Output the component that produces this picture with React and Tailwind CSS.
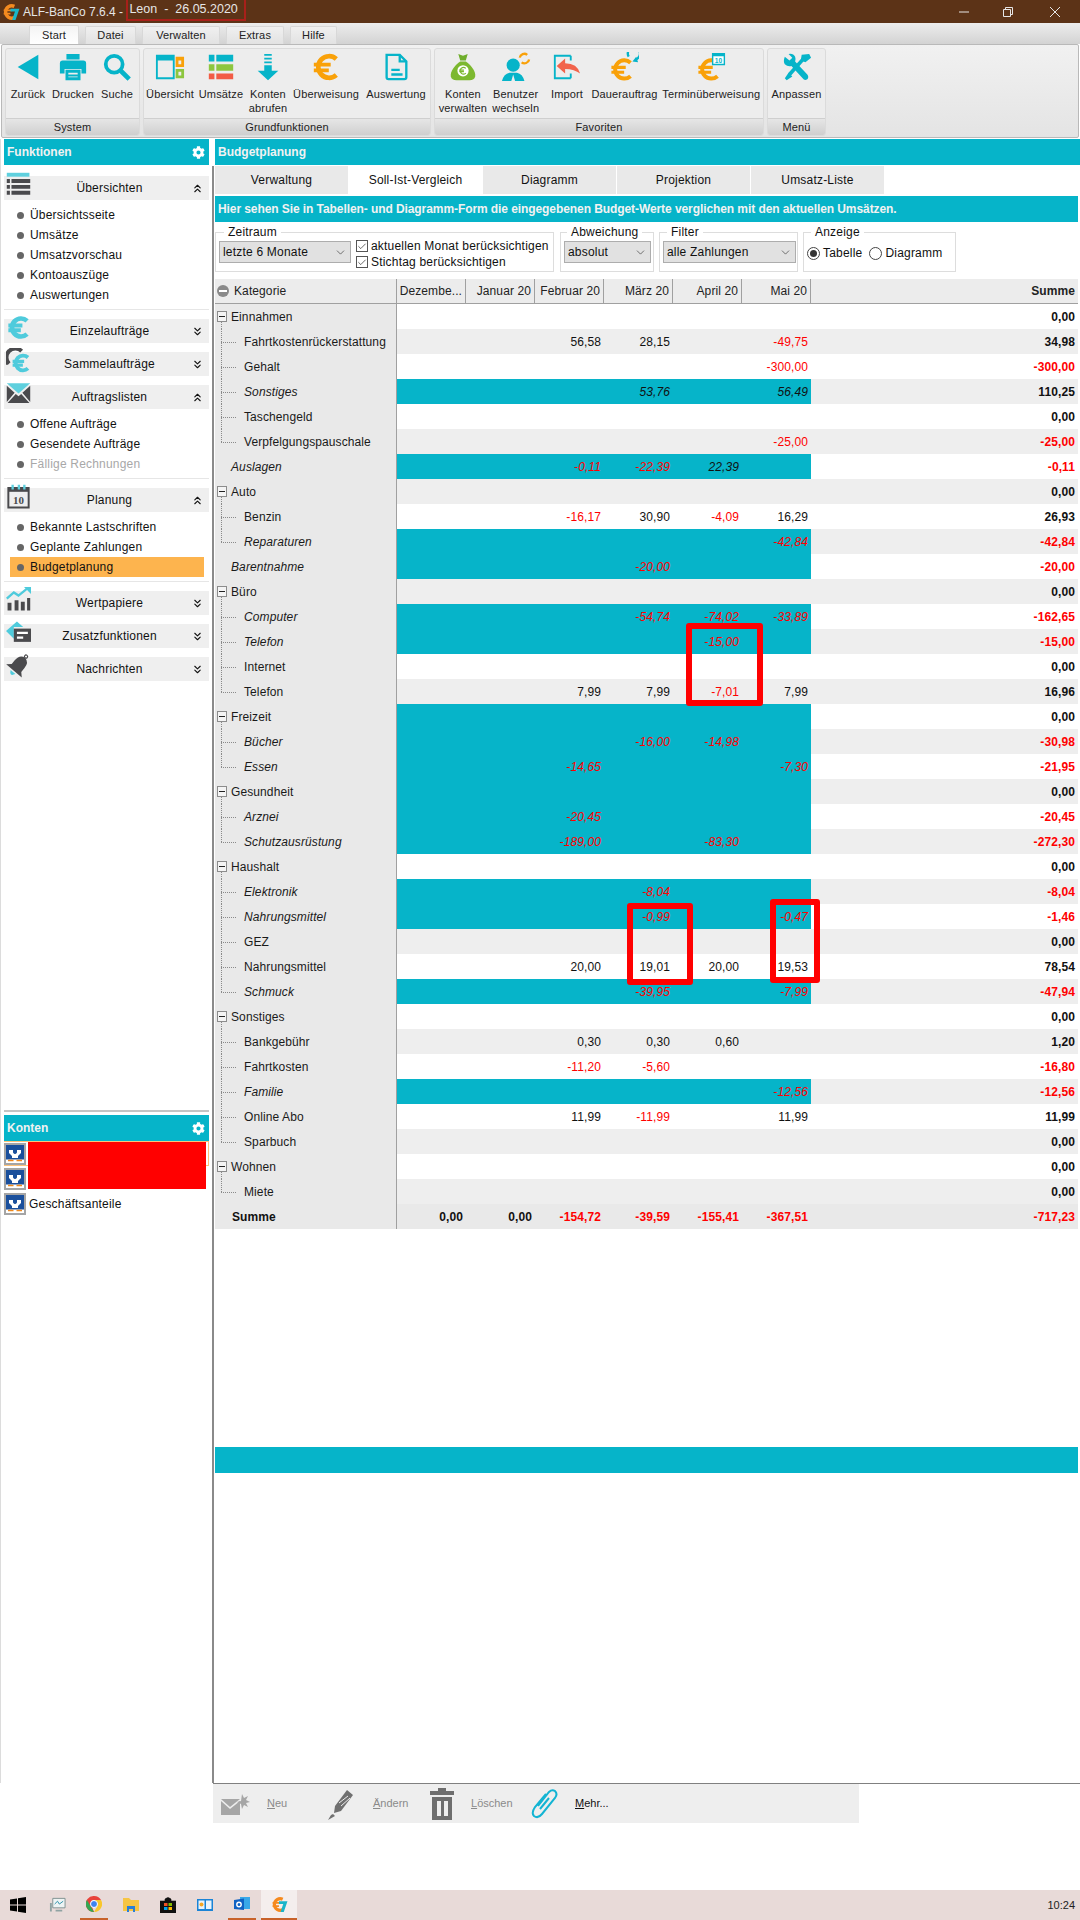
import { Check, ChevronDown, ChevronsDown, ChevronsUp } from "lucide-react";
import { FaCog } from "react-icons/fa";

const TEAL = "#06b4c9";
const ORANGE = "#f9a109";
const DARK = "#4a4a4d";

// Icons
const Euro = ({ color = ORANGE, w = 5 }) => (
  <g fill="none" stroke={color} strokeWidth={w}>
    <path d="M27 7.5A11.5 11.5 0 1 0 27 24.5" />
    <path d="M3 13.5H21M3 19.5H19" strokeWidth={w - 1} />
  </g>
);

const Ic = ({ size = 32, children, className = "" }) => (
  <svg viewBox="0 0 32 32" width={size} height={size} className={`shrink-0 ${className}`}>
    {children}
  </svg>
);

const AlfLogo = ({ size = 18 }) => (
  <Ic size={size}>
    <path d="M22 6A11 11 0 1 0 22 26" fill="none" stroke="#f58a1f" strokeWidth="6" />
    <path d="M3 13H17M3 19H15" stroke="#f58a1f" strokeWidth="3" />
    <path d="M15 10H31L24 30H18L23 15H15Z" fill="#19b5c9" />
  </Ic>
);

const ribbonIcons = {
  back: <path d="M27 3V29L5 16Z" fill={TEAL} />,
  print: (
    <g fill={TEAL}>
      <path d="M9 2H23V8H9Z" />
      <path d="M5 9H27Q30 9 30 12V23H25V18H7V23H2V12Q2 9 5 9Z" />
      <path d="M8 19H24V30H8ZM11 22V24H21V22ZM11 26V27H21V26Z" fillRule="evenodd" />
    </g>
  ),
  search: (
    <g fill="none" stroke={TEAL}>
      <circle cx="13" cy="13" r="9" strokeWidth="4" />
      <path d="M20 20L29 29" strokeWidth="5" />
    </g>
  ),
  overview: (
    <g>
      <path d="M2 4H20V28H2Z" fill="none" stroke={TEAL} strokeWidth="2" />
      <path d="M2 4H20V9H2Z" fill={TEAL} />
      <path d="M22 5H31V16H22ZM25 9V13H28V9Z" fill={ORANGE} fillRule="evenodd" />
      <path d="M22 18H31V28H22ZM25 21V25H28V21Z" fill="#8dc63f" fillRule="evenodd" />
    </g>
  ),
  list: (
    <g>
      <path d="M3 3H9V10H3Z" fill={TEAL} />
      <path d="M11 3H29V10H11Z" fill={TEAL} />
      <path d="M3 13H9V20H3ZM11 13H29V20H11Z" fill="#8dc63f" />
      <path d="M3 23H9V29H3ZM11 23H29V29H11Z" fill="#f25c45" />
    </g>
  ),
  fetch: (
    <g fill={TEAL}>
      <path d="M12 2H20V4H12ZM12 6H20V8H12ZM12 10H20V12H12Z" />
      <path d="M12 14H20V20H27L16 30L5 20H12Z" />
    </g>
  ),
  euro: <Euro />,
  doc: (
    <g fill="none" stroke={TEAL} strokeWidth="2.5">
      <path d="M6 3H20L27 10V27Q27 29 25 29H8Q6 29 6 27Z" />
      <path d="M20 3V10H27" />
      <path d="M11 19H20M11 24H23" />
    </g>
  ),
  bag: (
    <g>
      <path d="M11 2L16 4L21 2L19 9H13Z" fill="#6fae2c" />
      <path d="M13 10H19C25 14 30 21 29 26Q28 30 23 30H9Q4 30 3 26C2 21 7 14 13 10Z" fill="#7cb82f" />
      <circle cx="16" cy="20" r="6" fill="#fff" />
      <path d="M19 17.5A3.5 3.5 0 1 0 19 22.5M12 19.3H17M12 21H17" fill="none" stroke="#7cb82f" strokeWidth="1.3" />
    </g>
  ),
  user: (
    <g>
      <circle cx="13" cy="14" r="7" fill={TEAL} />
      <path d="M1 31Q3 23 9 22H17Q23 23 25 31H15L13 24L11 31Z" fill={TEAL} />
      <path d="M20 6A5 5 0 0 1 28 3M30 8A5 5 0 0 1 22 11" fill="none" stroke={ORANGE} strokeWidth="2.5" />
    </g>
  ),
  import: (
    <g>
      <path d="M20 4H3V28H20" fill="none" stroke={TEAL} strokeWidth="2" />
      <path d="M20 4V9M20 23V28" stroke={TEAL} strokeWidth="2" />
      <path d="M5 15L14 7V12Q27 12 30 23Q24 18 14 18V23Z" fill="#f2644c" />
    </g>
  ),
  standing: (
    <g>
      <g transform="translate(0 5) scale(.85)"><Euro /></g>
      <path d="M22 8A6.5 6.5 0 1 1 29 11" fill="none" stroke={TEAL} strokeWidth="2.5" transform="translate(-1 -3)" />
      <path d="M29 5L31 11L25 10Z" fill={TEAL} />
    </g>
  ),
  dated: (
    <g>
      <g transform="translate(0 5) scale(.85)"><Euro /></g>
      <path d="M17 1H31V14H17Z" fill={TEAL} />
      <path d="M18.500 4.500H29.500V12.500H18.500Z" fill="#fff" />
      <text x="24" y="11.500" fontSize="7" textAnchor="middle" fill={TEAL} fontWeight="700">10</text>
    </g>
  ),
  tools: (
    <g>
      <path d="M8 24L24 6" stroke={TEAL} strokeWidth="4" />
      <path d="M21 3L29 2L31 6L25 11L20 9Z" fill={TEAL} />
      <path d="M3 5L8 9L11 6L7 2Q12 1 14 5Q15 8 14 10L27 24Q29 27 27 29Q24 31 22 28L10 15Q6 16 3 13Q1 10 3 5Z" fill={TEAL} />
      <path d="M7 22L11 26L5 30L3 28Z" fill={TEAL} />
    </g>
  ),
};

const navIcons = {
  list: (
    <g>
      <path d="M1 1H30V6H1Z" fill="#5fd0de" />
      <path d="M1 9H5V14H1ZM7 9H31V14H7ZM1 16.500H5V21.500H1ZM7 16.500H31V21.500H7ZM1 24H5V29H1ZM7 24H31V29H7Z" fill={DARK} />
    </g>
  ),
  euro: <Euro color="#4fcbdc" w={6} />,
  gearEuro: (
    <g>
      <path d="M4 20A11 11 0 0 1 20 4" fill="none" stroke={DARK} strokeWidth="5" />
      <path d="M1.500 21A14 14 0 0 1 20 1" fill="none" stroke={DARK} strokeWidth="3" strokeDasharray="3 2.500" />
      <g transform="translate(6 6) scale(.82)"><Euro color="#4fcbdc" w={6} /></g>
    </g>
  ),
  mail: (
    <g>
      <path d="M1 3H31L16 16Z" fill="#5fd0de" />
      <path d="M1 6L11 15L1 27ZM31 6L21 15L31 27ZM12.500 16.500L16 19.500L19.500 16.500L30 28H2Z" fill={DARK} />
    </g>
  ),
  calendar: (
    <g>
      <path d="M3 5H29V30H3Z" fill="none" stroke={DARK} strokeWidth="2.5" />
      <path d="M3 5H29V10H3Z" fill={DARK} />
      <path d="M7 1H10V7H7ZM15 1H18V7H15ZM22 1H25V7H22Z" fill="#5fd0de" />
      <text x="16" y="25" fontSize="14" textAnchor="middle" fill={DARK} fontFamily="Liberation Serif" fontWeight="700">10</text>
    </g>
  ),
  chart: (
    <g>
      <path d="M2 20H7V30H2ZM11 17H16V30H11ZM19 19H24V30H19ZM27 14H31V30H27Z" fill={DARK} />
      <path d="M1 15L10 7L16 11L27 2" fill="none" stroke="#4fcbdc" strokeWidth="3" />
      <path d="M23 0H32V9Z" fill="#4fcbdc" />
    </g>
  ),
  card: (
    <g>
      <path d="M0 14L14 2L22 9H10V24Z" fill="#4fcbdc" />
      <path d="M10 11H32V28H10Z" fill={DARK} />
      <path d="M14 15H28V18H14ZM14 21H22V24H14Z" fill="#fff" />
    </g>
  ),
  bell: (
    <g>
      <g transform="rotate(40 16 16)">
        <path d="M16 3Q24 4 24 14V20L29 25H3L8 20V14Q8 4 16 3Z" fill={DARK} />
        <circle cx="16" cy="1" r="2" fill="none" stroke={DARK} strokeWidth="1.500" />
        <path d="M12 27H20Q18 31 16 31Q14 31 12 27Z" fill="#4fcbdc" />
      </g>
    </g>
  ),
};

const ribbon = [
  {
    label: "System",
    w: "w-[135px]",
    items: [
      { icon: "back", lines: ["Zurück"], w: "w-[44px]" },
      { icon: "print", lines: ["Drucken"], w: "w-[46px]" },
      { icon: "search", lines: ["Suche"], w: "w-[42px]" },
    ],
  },
  {
    label: "Grundfunktionen",
    w: "w-[288px]",
    items: [
      { icon: "overview", lines: ["Übersicht"], w: "w-[52px]" },
      { icon: "list", lines: ["Umsätze"], w: "w-[50px]" },
      { icon: "fetch", lines: ["Konten", "abrufen"], w: "w-[44px]" },
      { icon: "euro", lines: ["Überweisung"], w: "w-[72px]" },
      { icon: "doc", lines: ["Auswertung"], w: "w-[68px]" },
    ],
  },
  {
    label: "Favoriten",
    w: "w-[330px]",
    items: [
      { icon: "bag", lines: ["Konten", "verwalten"], w: "w-[52px] ml-[2px]" },
      { icon: "user", lines: ["Benutzer", "wechseln"], w: "w-[54px]" },
      { icon: "import", lines: ["Import"], w: "w-[49px]" },
      { icon: "standing", lines: ["Dauerauftrag"], w: "w-[66px]" },
      { icon: "dated", lines: ["Terminüberweisung"], w: "w-[104px] ml-[2px]" },
    ],
  },
  {
    label: "Menü",
    w: "w-[59px]",
    items: [{ icon: "tools", lines: ["Anpassen"], w: "w-[57px]" }],
  },
];

const topTabs = [
  { name: "Start", w: "w-[50px]", active: true },
  { name: "Datei", w: "w-[51px]" },
  { name: "Verwalten", w: "w-[78px]" },
  { name: "Extras", w: "w-[58px]" },
  { name: "Hilfe", w: "w-[47px]" },
];

const navSections = [
  {
    title: "Übersichten",
    icon: "list",
    open: true,
    items: ["Übersichtsseite", "Umsätze", "Umsatzvorschau", "Kontoauszüge", "Auswertungen"],
  },
  { title: "Einzelaufträge", icon: "euro" },
  { title: "Sammelaufträge", icon: "gearEuro" },
  {
    title: "Auftragslisten",
    icon: "mail",
    open: true,
    items: ["Offene Aufträge", "Gesendete Aufträge", "Fällige Rechnungen"],
    disabled: "Fällige Rechnungen",
  },
  {
    title: "Planung",
    icon: "calendar",
    open: true,
    items: ["Bekannte Lastschriften", "Geplante Zahlungen", "Budgetplanung"],
    active: "Budgetplanung",
  },
  { title: "Wertpapiere", icon: "chart" },
  { title: "Zusatzfunktionen", icon: "card" },
  { title: "Nachrichten", icon: "bell" },
];

// g = group row, c = child row, t = top level row without children
const rows = [
  { l: "Einnahmen", k: "g", s: "0,00" },
  { l: "Fahrtkostenrückerstattung", k: "c", v: { 2: "56,58", 3: "28,15", 5: "-49,75" }, s: "34,98" },
  { l: "Gehalt", k: "c", v: { 5: "-300,00" }, s: "-300,00" },
  { l: "Sonstiges", k: "c", i: 1, v: { 3: "53,76", 5: "56,49" }, s: "110,25" },
  { l: "Taschengeld", k: "c", s: "0,00" },
  { l: "Verpfelgungspauschale", k: "c", end: 1, v: { 5: "-25,00" }, s: "-25,00" },
  { l: "Auslagen", k: "t", i: 1, v: { 2: "-0,11", 3: "-22,39", 4: "22,39" }, s: "-0,11" },
  { l: "Auto", k: "g", s: "0,00" },
  { l: "Benzin", k: "c", v: { 2: "-16,17", 3: "30,90", 4: "-4,09", 5: "16,29" }, s: "26,93" },
  { l: "Reparaturen", k: "c", end: 1, i: 1, v: { 5: "-42,84" }, s: "-42,84" },
  { l: "Barentnahme", k: "t", i: 1, v: { 3: "-20,00" }, s: "-20,00" },
  { l: "Büro", k: "g", s: "0,00" },
  { l: "Computer", k: "c", i: 1, v: { 3: "-54,74", 4: "-74,02", 5: "-33,89" }, s: "-162,65" },
  { l: "Telefon", k: "c", i: 1, v: { 4: "-15,00" }, s: "-15,00" },
  { l: "Internet", k: "c", s: "0,00" },
  { l: "Telefon", k: "c", end: 1, v: { 2: "7,99", 3: "7,99", 4: "-7,01", 5: "7,99" }, s: "16,96" },
  { l: "Freizeit", k: "g", teal: 1, s: "0,00" },
  { l: "Bücher", k: "c", i: 1, v: { 3: "-16,00", 4: "-14,98" }, s: "-30,98" },
  { l: "Essen", k: "c", end: 1, i: 1, v: { 2: "-14,65", 5: "-7,30" }, s: "-21,95" },
  { l: "Gesundheit", k: "g", teal: 1, s: "0,00" },
  { l: "Arznei", k: "c", i: 1, v: { 2: "-20,45" }, s: "-20,45" },
  { l: "Schutzausrüstung", k: "c", end: 1, i: 1, v: { 2: "-189,00", 4: "-83,30" }, s: "-272,30" },
  { l: "Haushalt", k: "g", s: "0,00" },
  { l: "Elektronik", k: "c", i: 1, v: { 3: "-8,04" }, s: "-8,04" },
  { l: "Nahrungsmittel", k: "c", i: 1, v: { 3: "-0,99", 5: "-0,47" }, s: "-1,46" },
  { l: "GEZ", k: "c", s: "0,00" },
  { l: "Nahrungsmittel", k: "c", v: { 2: "20,00", 3: "19,01", 4: "20,00", 5: "19,53" }, s: "78,54" },
  { l: "Schmuck", k: "c", end: 1, i: 1, v: { 3: "-39,95", 5: "-7,99" }, s: "-47,94" },
  { l: "Sonstiges", k: "g", s: "0,00" },
  { l: "Bankgebühr", k: "c", v: { 2: "0,30", 3: "0,30", 4: "0,60" }, s: "1,20" },
  { l: "Fahrtkosten", k: "c", v: { 2: "-11,20", 3: "-5,60" }, s: "-16,80" },
  { l: "Familie", k: "c", i: 1, v: { 5: "-12,56" }, s: "-12,56" },
  { l: "Online Abo", k: "c", v: { 2: "11,99", 3: "-11,99", 5: "11,99" }, s: "11,99" },
  { l: "Sparbuch", k: "c", end: 1, s: "0,00" },
  { l: "Wohnen", k: "g", s: "0,00" },
  { l: "Miete", k: "c", end: 1, s: "0,00" },
];

const months = ["Dezembe...", "Januar 20", "Februar 20", "März 20", "April 20", "Mai 20"];
const totals = ["0,00", "0,00", "-154,72", "-39,59", "-155,41", "-367,51"];
const cols = "grid grid-cols-[182px_repeat(6,69px)_267px]";

const numColor = (s) => (s && s.startsWith("-") ? "text-[#f00]" : "text-[#111]");

function TitleBar() {
  return (
    <div className="h-[23px] bg-[#5c3317] flex items-stretch text-[12px] text-[#e6e6e6] shrink-0">
      <div className="pl-[2px] pr-[3px] flex items-center">
        <AlfLogo />
      </div>
      <span className="self-center whitespace-pre">ALF-BanCo 7.6.4 - </span>
      <span className="border-2 border-t-0 border-[#a8201a] h-[21px] w-[120px] pl-[1px] whitespace-pre flex items-center text-[12.500px]">
        {"Leon  -  26.05.2020"}
      </span>
      <div className="ml-auto flex items-center text-[#e6e6e6]">
        <svg viewBox="0 0 12 12" width="12" height="12" className="mr-[32px]">
          <path d="M1 6H11" stroke="currentColor" strokeWidth="1" />
        </svg>
        <svg viewBox="0 0 12 12" width="12" height="12" className="mr-[35px]">
          <path d="M1.500 3.500H8.500V10.500H1.500ZM3.500 3.500V1.500H10.500V8.500H8.500" fill="none" stroke="currentColor" />
        </svg>
        <svg viewBox="0 0 12 12" width="12" height="12" className="mr-[19px]">
          <path d="M1 1L11 11M11 1L1 11" stroke="currentColor" />
        </svg>
      </div>
    </div>
  );
}

function RibbonTabs() {
  return (
    <div className="h-[21px] bg-gradient-to-b from-[#ededed] to-[#d3d3d3] flex items-end gap-[6px] pl-[29px] shrink-0">
      {topTabs.map((t) => (
        <div
          key={t.name}
          className={`${t.w} h-[18px] rounded-t-[2px] border border-b-0 border-[#d8d8d8] flex items-center justify-center text-[11px] tracking-[0.15px] text-[#222] ${
            t.active ? "bg-gradient-to-b from-[#f4f4f4] to-white h-[19px]" : "bg-gradient-to-b from-[#f0f0f0] to-[#e2e2e2]"
          }`}
        >
          {t.name}
        </div>
      ))}
    </div>
  );
}

function Ribbon() {
  return (
    <div className="h-[94px] mx-[1px] border border-[#b9b9b9] rounded-[2px] bg-gradient-to-b from-[#f1f1f1] to-[#e4e4e4] flex gap-[3px] pl-[3px] pt-[3px] shrink-0">
      {ribbon.map((g) => (
        <div
          key={g.label}
          className={`${g.w} h-[88px] border border-[#dbdbdb] rounded-[3px] flex flex-col overflow-hidden bg-[#ededed]`}
        >
          <div className="h-[69px] flex">
            {g.items.map((b) => (
              <div key={b.lines[0] + b.icon} className={`${b.w} flex flex-col items-center pt-[3px]`}>
                <Ic size={30}>{ribbonIcons[b.icon]}</Ic>
                <div className="mt-[5px] text-[11px] leading-[14px] tracking-[0.15px] text-[#222] whitespace-nowrap text-center">
                  {b.lines.map((l) => (
                    <div key={l}>{l}</div>
                  ))}
                </div>
              </div>
            ))}
          </div>
          <div className="flex-1 bg-gradient-to-b from-[#e6e6e6] to-[#cfcfcf] border-t border-[#cfcfcf] flex items-center justify-center text-[11px] tracking-[0.15px] text-[#222]">
            {g.label}
          </div>
        </div>
      ))}
    </div>
  );
}

function PanelHeader({ title, gear }) {
  return (
    <div className="h-[26px] bg-[#06b4c9] flex items-center justify-between px-[3px] text-[12px] font-bold text-[#f2f2f2] shrink-0">
      <span>{title}</span>
      {gear && <FaCog size={13} className="text-white mr-[1px]" />}
    </div>
  );
}

function NavSection({ s }) {
  const Chevron = s.open ? ChevronsUp : ChevronsDown;
  return (
    <div>
      <div className="h-[24px] bg-[#efefef] flex items-center relative text-[12px] tracking-[0.2px] text-[#111]">
        <div className="w-[29px] pl-[2px] -mt-[8px]">
          <Ic size={25}>{navIcons[s.icon]}</Ic>
        </div>
        <span className="flex-1 text-center pr-[5px]">{s.title}</span>
        <Chevron size={13} strokeWidth={2} className="mr-[5px] text-[#111]" />
      </div>
      {s.open && (
        <div className="pt-[5px]">
          {s.items.map((it) => (
            <div
              key={it}
              className={`h-[20px] ml-[6px] mr-[5px] flex items-center gap-[6px] pl-[7px] text-[12px] tracking-[0.2px] ${
                it === s.active ? "bg-[#fdb44e]" : ""
              } ${it === s.disabled ? "text-[#a8a8a8]" : "text-[#111]"}`}
            >
              <span className="w-[7px] h-[7px] rounded-full bg-[#666]" />
              {it}
            </div>
          ))}
          <div className="border-b border-[#e6e6e6] mt-[4px] mb-[9px]" />
        </div>
      )}
    </div>
  );
}

const BankIcon = () => (
  <svg viewBox="0 0 22 22" width="22" height="22" className="shrink-0">
    <path d="M0 0H22V22H0Z" fill="#a5a5a5" />
    <path d="M2 2H20V20H2Z" fill="#1a4f9c" />
    <path d="M5 7H9V9.500Q10 11 11 11Q12 11 13 9.500V7H17V10Q15 12 14 13V15H8V13Q7 12 5 10Z" fill="#fff" />
    <path d="M2 16.500H20V20H2Z" fill="#fff" />
    <path d="M4 17.500H9.500M12.500 17.500H18" stroke="#f08a1d" strokeWidth="1.500" />
  </svg>
);

function LeftPanel() {
  return (
    <div className="w-[212px] pl-[3px] pr-[3px] flex flex-col shrink-0 border-l border-[#dcdcdc]">
      <PanelHeader title="Funktionen" gear />
      <div className="flex flex-col pt-[11px] flex-1">
        {navSections.map((s) => (
          <div key={s.title} className={s.open ? "" : "mb-[9px]"}>
            <NavSection s={s} />
          </div>
        ))}
      </div>
      <div className="border-t-2 border-[#c4c4c4] pt-[3px] mb-[567px]">
        <PanelHeader title="Konten" gear />
        <div className="relative flex flex-col">
          <div className="h-[25px] flex items-center border-y border-r border-[#fdc27a]">
            <BankIcon />
          </div>
          <div className="h-[25px] flex items-center">
            <BankIcon />
          </div>
          <div className="h-[25px] flex items-center gap-[3px] text-[12px] tracking-[0.2px] text-[#111]">
            <BankIcon />
            Geschäftsanteile
          </div>
          <div className="absolute left-[24px] right-[3px] top-[1px] h-[47px] bg-[#f00]" />
        </div>
      </div>
    </div>
  );
}

function Group({ legend, className, children }) {
  return (
    <fieldset className={`${className} h-[47px] border border-[#dddddd]`}>
      <legend className="px-[4px] text-[12px] leading-[14px] tracking-[0.2px] text-[#111]">{legend}</legend>
      <div className="flex items-start pt-[2px] pl-[3px]">{children}</div>
    </fieldset>
  );
}

const Select = ({ w, children }) => (
  <div className={`${w} h-[22px] bg-[#e1e1e1] border border-[#adadad] flex items-center justify-between pl-[3px] pr-[3px] text-[12px] tracking-[0.2px] text-[#111]`}>
    <span>{children}</span>
    <ChevronDown size={13} strokeWidth={1} />
  </div>
);

const CheckRow = ({ children }) => (
  <div className="flex items-center gap-[3px] h-[16px] text-[12px] tracking-[0.2px] text-[#111] whitespace-nowrap">
    <span className="w-[12px] h-[12px] border border-[#555] bg-white flex items-center justify-center">
      <Check size={11} strokeWidth={1.500} />
    </span>
    {children}
  </div>
);

function Filters() {
  return (
    <div className="flex mt-[3px]">
      <Group legend="Zeitraum" className="w-[339px] pl-[8px]">
        <div className="-ml-[8px] flex">
          <Select w="w-[132px]">letzte 6 Monate</Select>
          <div className="ml-[5px] -mt-[3px]">
            <CheckRow>aktuellen Monat berücksichtigen</CheckRow>
            <CheckRow>Stichtag berücksichtigen</CheckRow>
          </div>
        </div>
      </Group>
      <Group legend="Abweichung" className="w-[94px] ml-[6px] pl-[6px]">
        <div className="-ml-[6px]">
          <Select w="w-[87px]">absolut</Select>
        </div>
      </Group>
      <Group legend="Filter" className="w-[139px] ml-[5px] pl-[7px]">
        <div className="-ml-[7px]">
          <Select w="w-[133px]">alle Zahlungen</Select>
        </div>
      </Group>
      <Group legend="Anzeige" className="w-[153px] ml-[5px] pl-[7px]">
        <div className="-ml-[7px] flex items-center h-[24px] text-[12px] tracking-[0.2px] text-[#111]">
          <span className="w-[13px] h-[13px] rounded-full border border-[#444] flex items-center justify-center mr-[3px]">
            <span className="w-[7px] h-[7px] rounded-full bg-[#333]" />
          </span>
          Tabelle
          <span className="w-[13px] h-[13px] rounded-full border border-[#444] ml-[7px] mr-[3px]" />
          Diagramm
        </div>
      </Group>
    </div>
  );
}

const dotted = "border-dotted border-[#8a8a8a]";

function TreeGuide({ row }) {
  if (row.k === "g") {
    return (
      <div className="w-[14px] ml-[2px] flex flex-col">
        <div className="h-[7px]" />
        <div className="w-[10px] h-[11px] border border-[#8c8c8c] bg-[#f4f4f4] flex items-center justify-center">
          <span className="w-[6px] h-[1px] bg-[#222]" />
        </div>
        <div className={`h-[7px] ml-[4px] border-l ${dotted}`} />
      </div>
    );
  }
  if (row.k === "c") {
    return (
      <div className="w-[23px] ml-[6px] flex flex-col">
        <div className={`h-1/2 border-l ${dotted}`} />
        <div className={`h-1/2 w-[15px] border-t ${dotted} ${row.end ? "" : "border-l"}`} />
      </div>
    );
  }
  return <div className="w-[16px]" />;
}

function BudgetTable() {
  return (
    <div className="relative mt-[7px] mb-[218px] text-[12px] tracking-[0.1px]">
      <div className={`${cols} h-[25px] bg-[#ececec] border-b border-[#a0a0a0] text-[#222]`}>
        <div className="flex items-center gap-[5px] pl-[2px] border-r border-[#a0a0a0]">
          <span className="w-[12px] h-[12px] rounded-full bg-[#8a8a8a] flex items-center justify-center">
            <span className="w-[8px] h-[2px] bg-white" />
          </span>
          Kategorie
        </div>
        {months.map((m) => (
          <div key={m} className="flex items-center justify-end pr-[3px] border-r border-[#a0a0a0] whitespace-nowrap">
            {m}
          </div>
        ))}
        <div className="flex items-center justify-end pr-[3px] font-bold">Summe</div>
      </div>
      {rows.map((r, idx) => {
        const teal = r.i || r.teal;
        const stripe = idx % 2 ? "bg-[#eeeeee]" : "bg-white";
        return (
          <div key={r.l + idx} className={`${cols} h-[25px] ${stripe}`}>
            <div className={`flex items-stretch bg-[#e9e9e9] border-r border-[#a0a0a0] text-[#1a1a1a] ${r.i ? "italic" : ""}`}>
              <TreeGuide row={r} />
              <span className="self-center whitespace-nowrap">{r.l}</span>
            </div>
            {[0, 1, 2, 3, 4, 5].map((c) => (
              <div
                key={c}
                className={`flex items-center justify-end pr-[3px] ${teal ? "bg-[#06b4c9]" : ""} ${r.i ? "italic" : ""} ${numColor(r.v?.[c])}`}
              >
                {r.v?.[c]}
              </div>
            ))}
            <div className={`flex items-center justify-end pr-[3px] font-bold ${numColor(r.s)}`}>{r.s}</div>
          </div>
        );
      })}
      <div className={`${cols} h-[25px] bg-[#e9e9e9] font-bold`}>
        <div className="flex items-center pl-[17px] border-r border-[#a0a0a0] text-[#111]">Summe</div>
        {totals.map((t, c) => (
          <div key={c} className={`flex items-center justify-end pr-[3px] ${numColor(t)}`}>
            {t}
          </div>
        ))}
        <div className="flex items-center justify-end pr-[3px] text-[#f00]">-717,23</div>
      </div>

      {/* red marks drawn over the table */}
      <div className="absolute left-[471px] top-[344px] w-[77px] h-[83px] border-[6px] border-[#f00] rounded-[3px]" />
      <div className="absolute left-[412px] top-[624px] w-[66px] h-[82px] border-[6px] border-[#f00] rounded-[3px]" />
      <div className="absolute left-[555px] top-[620px] w-[50px] h-[84px] border-[6px] border-[#f00] rounded-[3px]" />
    </div>
  );
}

function RightPanel() {
  const tabs = [
    { n: "Verwaltung", w: "w-[133px]" },
    { n: "Soll-Ist-Vergleich", w: "w-[135px]", active: true },
    { n: "Diagramm", w: "w-[133px]" },
    { n: "Projektion", w: "w-[133px] ml-[1px]" },
    { n: "Umsatz-Liste", w: "w-[133px] ml-[1px]" },
  ];
  return (
    <div className="w-[865px] flex flex-col">
      <PanelHeader title="Budgetplanung" />
      <div className="flex h-[29px] pt-[1px] shrink-0">
        {tabs.map((t) => (
          <div
            key={t.n}
            className={`${t.w} flex items-center justify-center text-[12px] tracking-[0.2px] text-[#111] ${t.active ? "bg-white" : "bg-[#e9e9e9]"}`}
          >
            {t.n}
          </div>
        ))}
      </div>
      <div className="h-[26px] mt-[2px] mr-[2px] bg-[#06b4c9] flex items-center pl-[3px] text-[12px] tracking-[-0.08px] font-bold text-[#f2f2f2] shrink-0">
        Hier sehen Sie in Tabellen- und Diagramm-Form die eingegebenen Budget-Werte verglichen mit den aktuellen Umsätzen.
      </div>
      <Filters />
      <div className="mr-[2px]">
        <BudgetTable />
        <div className="h-[26px] bg-[#06b4c9]" />
      </div>
    </div>
  );
}

function BottomBar() {
  const tool = "text-[11px] text-[#8a8a8a]";
  return (
    <div className="h-[107px] pl-[213px] shrink-0">
      <div className="border-t border-[#808080]">
        <div className="w-[646px] h-[39px] bg-[#eeeeee] flex items-center">
          <svg viewBox="0 0 30 24" width="30" height="24" className="ml-[7px]">
            <path d="M1 7H20L10 15ZM1 9L10 17L20 9V23H1Z" fill="#a6a6a6" />
            <path d="M22 2L24 6L28 4L26 8L30 10L26 11L28 15L24 13L22 17L21 12L17 10L21 9Z" fill="#a6a6a6" />
          </svg>
          <span className={`${tool} ml-[17px] w-[59px]`}><u>N</u>eu</span>
          <svg viewBox="0 0 28 32" width="28" height="32">
            <path d="M9 18L21 2L27 7L15 23L8 25ZM5 27L7 26L9 28L2 32Z" fill="#707070" />
            <path d="M13 15L22 8M15 18L24 10" stroke="#eee" />
          </svg>
          <span className={`${tool} ml-[19px] w-[57px]`}><u>Ä</u>ndern</span>
          <svg viewBox="0 0 24 32" width="24" height="32">
            <path d="M8 0H16V3H24V7H0V3H8ZM2 9H22V32H2ZM7 13V28H11V13ZM14 13V28H18V13Z" fill="#6e6e6e" fillRule="evenodd" />
          </svg>
          <span className={`${tool} ml-[17px] w-[60px]`}><u>L</u>öschen</span>
          <svg viewBox="0 0 28 32" width="28" height="32">
            <path d="M7 18L18 4Q21 1 24 3Q27 6 24 10L11 26Q7 31 3 28Q0 25 4 19L15 6M9 21L18 10" fill="none" stroke="#13b4d3" strokeWidth="2" />
          </svg>
          <span className="text-[11px] text-[#111] ml-[16px]"><u>M</u>ehr...</span>
        </div>
      </div>
    </div>
  );
}

function TaskBar() {
  return (
    <div className="h-[30px] bg-[#e8dad8] flex items-stretch shrink-0 relative">
      <div className="w-[45px] pl-[10px] flex items-center">
        <svg viewBox="0 0 16 16" width="16" height="16">
          <path d="M0 2.500L7 1.500V7.500H0ZM8 1.300L16 0V7.500H8ZM0 8.500H7V14.500L0 13.500ZM8 8.500H16V16L8 14.700Z" fill="#000" />
        </svg>
      </div>
      <div className="w-[35px] flex items-center pl-[4px]">
        <svg viewBox="0 0 18 16" width="17" height="16">
          <path d="M4 1H17V11H4Z" fill="#eef4f4" stroke="#7d8f8f" />
          <path d="M6 7L9 4L11 7L15 4" fill="none" stroke="#2a8fa8" />
          <path d="M1 6H3V15H1ZM7 13H14V15H7Z" fill="#8fa3a3" />
        </svg>
      </div>
      <div className="w-[28px] flex items-center justify-center border-b-2 border-[#c8622a]">
        <svg viewBox="0 0 16 16" width="16" height="16">
          <path d="M8 0A8 8 0 0 1 15 4H8Z" fill="#e8423a" />
          <path d="M1.500 3A8 8 0 0 1 8 0V4Q5 4 4.500 7L8 16A8 8 0 0 1 1.500 3Z" fill="#e8423a" />
          <path d="M1 4L5 11L8 16A8 8 0 0 1 1 4Z" fill="#34a853" />
          <path d="M15 4A8 8 0 0 1 8 16L11.500 10Q12 6 8 4Z" fill="#f9c62b" />
          <circle cx="8" cy="8" r="3.500" fill="#3e83ef" stroke="#fff" />
        </svg>
      </div>
      <div className="w-[52px] flex items-center pl-[15px]">
        <svg viewBox="0 0 16 16" width="16" height="16">
          <path d="M0 1H6L8 3H16V14H0Z" fill="#f6c544" />
          <path d="M4 9H12V15H10V12H6V15H4Z" fill="#2a7fd6" />
        </svg>
      </div>
      <div className="w-[37px] flex items-center">
        <svg viewBox="0 0 16 16" width="16" height="16">
          <path d="M5 4V2Q8-1 11 2V4M0 4H16V16H0Z" fill="#111" stroke="#111" strokeWidth=".6" />
          <path d="M4 6H7.500V9H4Z" fill="#f25022" />
          <path d="M8.500 6H12V9H8.500Z" fill="#7fba00" />
          <path d="M4 10H7.500V13H4Z" fill="#00a4ef" />
          <path d="M8.500 10H12V13H8.500Z" fill="#ffb900" />
        </svg>
      </div>
      <div className="w-[31px] flex items-center">
        <svg viewBox="0 0 16 14" width="16" height="14">
          <path d="M0 1H16V13H0Z" fill="#1b84d6" />
          <path d="M1.500 2.500H7.500V11H1.500ZM9 2.500H14.500V11H9Z" fill="#e9f3fb" />
          <circle cx="4.500" cy="6.500" r="2" fill="#f5a623" />
        </svg>
      </div>
      <div className="w-[28px] mr-[5px] flex items-center justify-center border-b-2 border-[#c8622a]">
        <svg viewBox="0 0 17 16" width="17" height="16">
          <path d="M6 1H16V13H6Z" fill="#38a8e8" />
          <path d="M0 4L10 2.500V14L0 13Z" fill="#0f62c4" />
          <circle cx="5" cy="8.500" r="2.200" fill="none" stroke="#fff" strokeWidth="1.400" />
        </svg>
      </div>
      <div className="w-[36px] bg-[#f4eeed] flex items-center justify-center border-b-2 border-[#c8622a]">
        <AlfLogo size={17} />
      </div>
      <span className="ml-auto mr-[5px] self-center text-[11px] text-[#222]">10:24</span>
    </div>
  );
}

export default function App() {
  return (
    <div className="w-[1080px] h-[1920px] flex flex-col bg-white overflow-hidden font-['Liberation_Sans',Arial,sans-serif]">
      <TitleBar />
      <RibbonTabs />
      <Ribbon />
      <div className="flex-1 flex pt-[1px] min-h-0">
        <LeftPanel />
        <div className="w-[3px] shrink-0 flex justify-start">
          <div className="w-[2px] mt-[27px] bg-[#8a8a8a]" />
        </div>
        <RightPanel />
      </div>
      <BottomBar />
      <TaskBar />
    </div>
  );
}
